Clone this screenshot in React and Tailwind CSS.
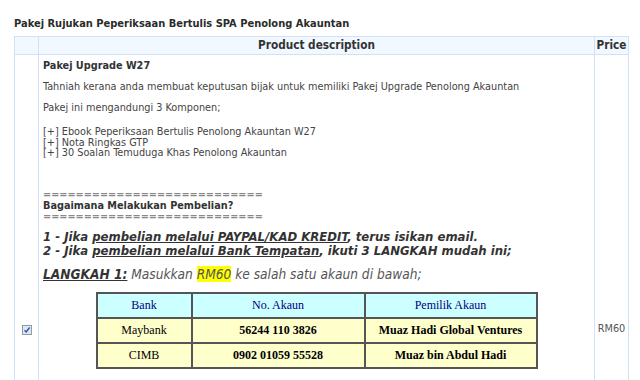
export default function App() {
  const body = "font-['DejaVu_Sans_Condensed','DejaVu_Sans',sans-serif]"
  return (
    <div className={`w-[640px] h-[380px] overflow-hidden bg-white text-[#333] ${body}`}>
      <div className="pl-[14px] pt-[17px] text-[11px] font-bold leading-[13px] text-[#2b2b2b]">
        Pakej Rujukan Peperiksaan Bertulis SPA Penolong Akauntan
      </div>

      <table className="ml-[14px] mt-[6px] w-[615px] table-fixed border-collapse border border-[#d0e2fa]">
        <thead>
          <tr className="bg-[#f1f8ff]">
            <th className="w-[24px] h-[18px] border border-[#d0e2fa]"></th>
            <th className="border border-[#d0e2fa] text-[11.7px] leading-[17px] font-bold text-[#333]">
              Product description
            </th>
            <th className="w-[34px] border border-[#d0e2fa] text-[11.7px] leading-[17px] font-bold text-[#333]">
              Price
            </th>
          </tr>
        </thead>
        <tbody>
          <tr>
            <td className="h-[550px] border border-[#d0e2fa] text-center align-middle">
              <span className="inline-flex w-[10px] h-[10px] items-center justify-center border border-[#8f9bab] bg-[#dfe6ef] align-middle">
                <svg width="8" height="8" viewBox="0 0 8 8">
                  <path d="M1.5 4.2 L3.2 6 L6.6 1.5" fill="none" stroke="#2a4fb0" strokeWidth="1.3" />
                </svg>
              </span>
            </td>
            <td className="border border-[#d0e2fa] align-top px-[4px] pt-[4px] text-[10.8px] leading-[13px] text-[#444]">
              <div className="font-bold text-[#333]">Pakej Upgrade W27</div>
              <p className="mt-[8px]">
                Tahniah kerana anda membuat keputusan bijak untuk memiliki Pakej Upgrade Penolong Akauntan
              </p>
              <p className="mt-[8px]">Pakej ini mengandungi 3 Komponen;</p>
              <div className="mt-[13px] leading-[10.5px]">
                <div>[+] Ebook Peperiksaan Bertulis Penolong Akauntan W27</div>
                <div>[+] Nota Ringkas GTP</div>
                <div>[+] 30 Soalan Temuduga Khas Penolong Akauntan</div>
              </div>
              <div className="mt-[30px] leading-[11px] font-bold">
                <div className="text-[#8a8a8a]">===========================</div>
                <div className="text-[#333]">Bagaimana Melakukan Pembelian?</div>
                <div className="text-[#8a8a8a]">===========================</div>
              </div>
              <div className="mt-[8px] text-[13px] leading-[14px] font-bold italic text-[#333]">
                <div>
                  1 - Jika <span className="underline">pembelian melalui PAYPAL/KAD KREDIT</span>, terus isikan email.
                </div>
                <div>
                  2 - Jika <span className="underline">pembelian melalui Bank Tempatan</span>, ikuti 3 LANGKAH mudah ini;
                </div>
              </div>
              <div className="mt-[8px] text-[13.6px] leading-[17px] italic text-[#555]">
                <span className="font-bold underline text-[#333]">LANGKAH 1:</span> Masukkan{' '}
                <span className="bg-[#ffff00]">RM60</span> ke salah satu akaun di bawah;
              </div>
              <table className="mx-auto mt-[9px] w-[442px] border-collapse border-2 border-[#555] font-['Liberation_Serif',serif] text-[12px] text-center">
                <thead>
                  <tr className="bg-[#ccffff] text-[#000080]">
                    <td className="w-[95px] h-[25px] border-2 border-[#555] font-normal">Bank</td>
                    <td className="w-[173px] border-2 border-[#555] font-normal">No. Akaun</td>
                    <td className="border-2 border-[#555] font-normal">Pemilik Akaun</td>
                  </tr>
                </thead>
                <tbody className="bg-[#ffffcc] text-black">
                  <tr>
                    <td className="h-[25px] border-2 border-[#555]">Maybank</td>
                    <td className="border-2 border-[#555] font-bold">56244 110 3826</td>
                    <td className="border-2 border-[#555] font-bold">Muaz Hadi Global Ventures</td>
                  </tr>
                  <tr>
                    <td className="h-[25px] border-2 border-[#555]">CIMB</td>
                    <td className="border-2 border-[#555] font-bold">0902 01059 55528</td>
                    <td className="border-2 border-[#555] font-bold">Muaz bin Abdul Hadi</td>
                  </tr>
                </tbody>
              </table>
            </td>
            <td className="border border-[#d0e2fa] text-center align-middle text-[10.8px] text-[#555]">RM60</td>
          </tr>
        </tbody>
      </table>
    </div>
  )
}
